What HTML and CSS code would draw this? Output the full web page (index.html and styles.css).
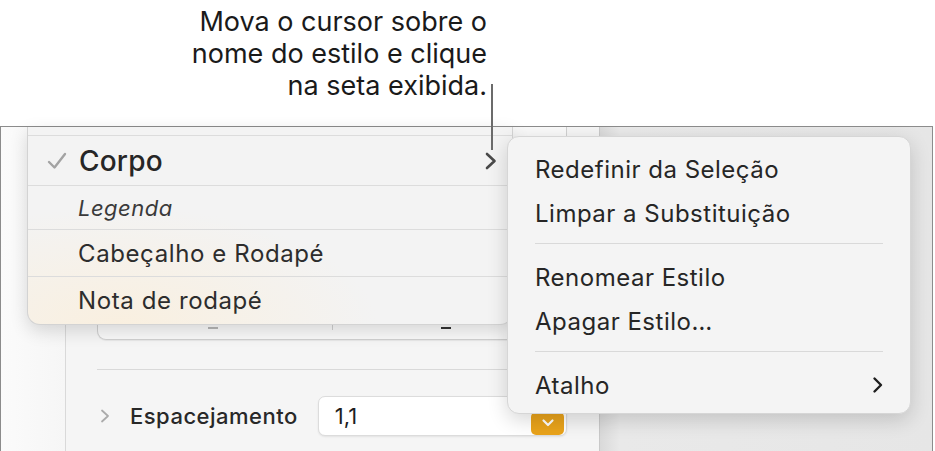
FILE: index.html
```html
<!DOCTYPE html>
<html lang="pt">
<head>
  <meta charset="UTF-8" />
  <title>Estilos de parágrafo</title>
  <link rel="stylesheet" href="styles.css">
</head>
<body>

  <div class="callout">
    Mova o cursor sobre o<br>
    nome do estilo e clique<br>
    na seta exibida.
  </div>
  <div class="callout-line"></div>

  <div class="window">
    <div class="gutter"></div>
    <div class="sidebar">
      <div class="field-box">
        <span class="dash light"></span>
        <span class="divider"></span>
        <span class="dash dark"></span>
      </div>
      <div class="rule"></div>
      <div class="spacing-row">
        <svg class="disclosure" width="10" height="14" viewBox="0 0 10 14"><path d="M2 1.5 L8 7 L2 12.5" fill="none" stroke="#ababab" stroke-width="1.8" stroke-linecap="round" stroke-linejoin="round"/></svg>
        <span class="spacing-label">Espacejamento</span>
        <div class="spacing-field">
          <span>1,1</span>
          <span class="stepper">
            <svg width="14" height="10" viewBox="0 0 14 10"><path d="M2.5 2.5 L7 7 L11.5 2.5" fill="none" stroke="#fff" stroke-width="2.2" stroke-linecap="round" stroke-linejoin="round"/></svg>
          </span>
        </div>
      </div>
    </div>
    <div class="canvas"></div>
  </div>

  <!-- styles popup -->
  <div class="styles-menu">
    <div class="style-row partial"></div>
    <div class="style-row current">
      <svg class="check" width="20" height="18" viewBox="0 0 20 18"><path d="M2 10 L7.5 15.5 L18 2" fill="none" stroke="#a3a3a3" stroke-width="2.4" stroke-linecap="round" stroke-linejoin="round"/></svg>
      <span>Corpo</span>
      <svg class="more" width="14" height="20" viewBox="0 0 14 20"><path d="M3 3 L10.5 10 L3 17" fill="none" stroke="#4a4a4a" stroke-width="2.6" stroke-linecap="round" stroke-linejoin="round"/></svg>
    </div>
    <div class="style-row italic"><span>Legenda</span></div>
    <div class="style-row"><span>Cabeçalho e Rodapé</span></div>
    <div class="style-row last"><span>Nota de rodapé</span></div>
  </div>

  <!-- context menu -->
  <div class="context-menu">
    <div class="menu-item">Redefinir da Seleção</div>
    <div class="menu-item">Limpar a Substituição</div>
    <div class="menu-sep"></div>
    <div class="menu-item">Renomear Estilo</div>
    <div class="menu-item">Apagar Estilo…</div>
    <div class="menu-sep"></div>
    <div class="menu-item submenu">
      <span>Atalho</span>
      <svg width="12" height="18" viewBox="0 0 12 18"><path d="M2.5 2.5 L9 9 L2.5 15.5" fill="none" stroke="#1e1e1e" stroke-width="2.4" stroke-linecap="round" stroke-linejoin="round"/></svg>
    </div>
  </div>

</body>
</html>
```

FILE: styles.css
```css
* { box-sizing: border-box; }
body {
  margin: 0;
  width: 935px;
  height: 451px;
  overflow: hidden;
  position: relative;
  background: #fff;
  font-family: 'Inter', 'Liberation Sans', sans-serif;
  color: #262626;
}

.callout {
  width: 487px;
  height: 126px;
  padding-top: 6px;
  text-align: right;
  font-size: 27px;
  line-height: 32px;
  color: #1a1a1a;
}
.callout-line {
  position: absolute;
  left: 491px;
  top: 84px;
  width: 1.5px;
  height: 66px;
  background: #6b6b6b;
  z-index: 5;
}

.window {
  display: flex;
  width: 933px;
  height: 325px;
  border-top: 1.5px solid #8c8c8c;
  border-left: 1.5px solid #8c8c8c;
  border-right: 1.5px solid #8c8c8c;
}
.gutter {
  width: 64px;
  background: linear-gradient(to right, #fbfbfb, #f6f6f6);
}
.sidebar {
  width: 535px;
  background: #f5f5f5;
  border-left: 1px solid #d9d9d9;
  border-right: 1px solid #c9c9c9;
  padding: 0 32px 0 31px;
}
.canvas {
  flex: 1;
  background: linear-gradient(to right, #d9d9d9, #e9e9e9 20px, #e6e6e6);
}

.field-box {
  height: 213px;
  border: 1px solid #d0d0d0;
  border-top: none;
  border-radius: 0 0 9px 9px;
  background: #f9f9f9;
  box-shadow: 0 1px 1px rgba(0,0,0,0.06);
  position: relative;
}
.field-box .dash {
  position: absolute;
  bottom: 10px;
  width: 10px;
  height: 2px;
}
.field-box .dash.light { left: 110px; background: #b5b5b5; }
.field-box .dash.dark { left: 343px; background: #333; }
.field-box .divider {
  position: absolute;
  left: 234px;
  bottom: 9px;
  width: 1px;
  height: 8px;
  background: #cfcfcf;
}

.rule {
  height: 1px;
  background: #d9d9d9;
  margin-top: 29px;
}

.spacing-row {
  display: flex;
  align-items: center;
  margin-top: 26px;
}
.disclosure { margin-left: 3px; }
.spacing-label {
  margin-left: 20px;
  font-size: 22px;
  letter-spacing: 0.5px;
  font-weight: 500;
  color: #282828;
}
.spacing-field {
  margin-left: 20px;
  flex: 1;
  height: 40px;
  background: #fff;
  border: 1px solid #dcdcdc;
  border-radius: 7px;
  box-shadow: 0 1px 2px rgba(0,0,0,0.08);
  display: flex;
  align-items: center;
  justify-content: space-between;
  padding: 0 2px 0 16px;
  font-size: 22px;
  color: #1e1e1e;
}
.stepper {
  width: 33px;
  height: 23px;
  margin-top: 14px;
  border-radius: 5px;
  background: #e9a31b;
  display: flex;
  align-items: center;
  justify-content: center;
}

/* styles popup */
.styles-menu {
  position: absolute;
  left: 27px;
  top: 127px;
  width: 486px;
  height: 198px;
  border: 1px solid #d3d3d3;
  border-top: none;
  border-radius: 0 0 13px 13px;
  background:
    radial-gradient(ellipse 260px 120px at 90px 200px, rgba(252,238,215,0.7), rgba(252,238,215,0) 100%),
    #f3f3f3;
  box-shadow: 0 6px 18px rgba(0,0,0,0.14);
  z-index: 3;
  overflow: hidden;
}
.style-row {
  display: flex;
  align-items: center;
  padding-left: 50px;
  border-bottom: 1px solid #dcdcdc;
  font-size: 24px;
  letter-spacing: 0.6px;
  color: #2d2d2d;
  position: relative;
}
.style-row.partial { height: 9px; }
.style-row.current { height: 50px; padding-left: 19px; font-size: 28px; letter-spacing: 0.2px; font-weight: 500; color: #262626; }
.style-row.current .check { margin-right: 12px; }
.style-row.current .more { position: absolute; left: 456px; top: 15px; }
.style-row.italic { height: 44px; font-style: italic; font-size: 22px; letter-spacing: 0.5px; color: #3a3a3a; }
.style-row:nth-child(4) { height: 47px; }
.style-row.last { height: 47px; border-bottom: none; }

/* context menu */
.context-menu {
  position: absolute;
  left: 507px;
  top: 136px;
  width: 404px;
  height: 278px;
  padding: 10px 0 0;
  background: #f4f4f4;
  border: 1px solid #d6d6d6;
  border-radius: 12px;
  box-shadow: 0 6px 20px rgba(0,0,0,0.16);
  z-index: 4;
}
.menu-item {
  height: 44px;
  display: flex;
  align-items: center;
  padding: 0 28px 0 27px;
  font-size: 24px;
  letter-spacing: 0.5px;
  color: #262626;
}
.menu-item.submenu { justify-content: space-between; padding-right: 26px; }
.menu-sep {
  height: 1px;
  margin: 8px 27px 11px;
  background: #d9d9d9;
}
```
